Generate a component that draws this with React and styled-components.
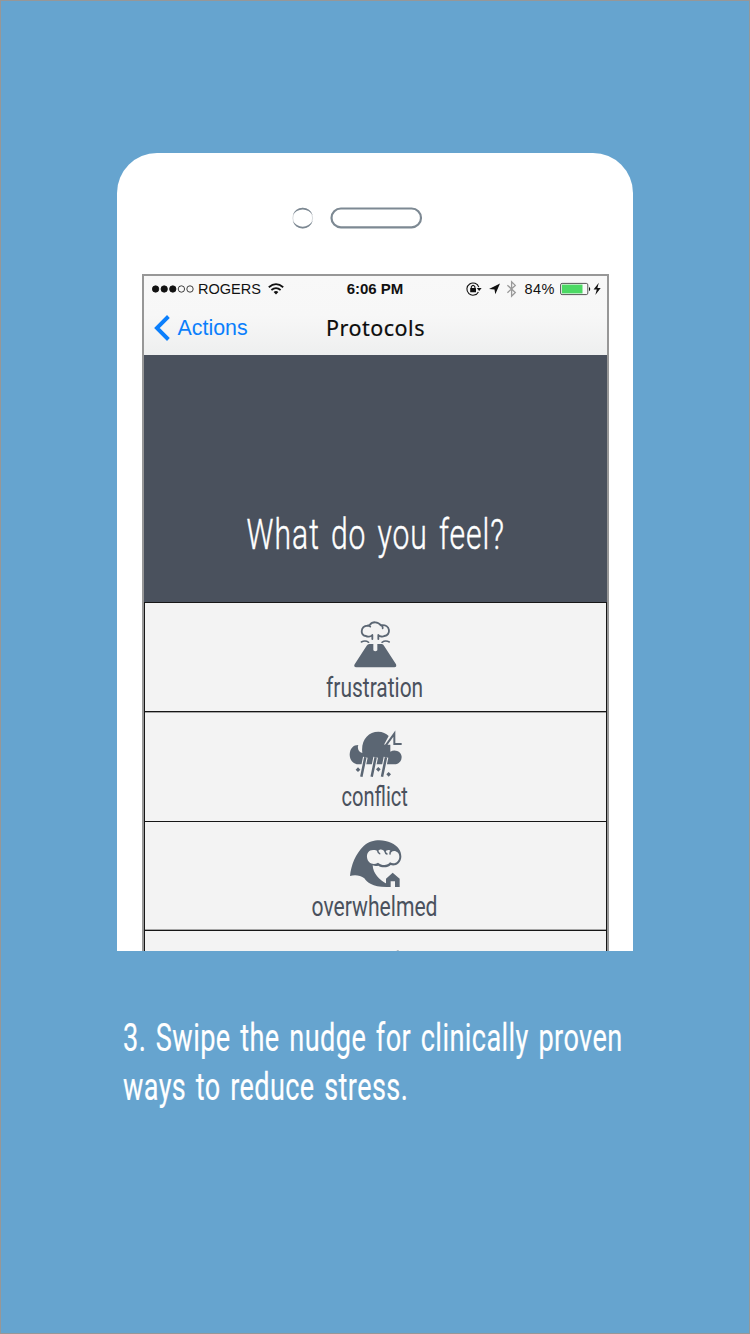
import React from "react";
import styled, { createGlobalStyle } from "styled-components";

const GlobalStyle = createGlobalStyle`
  *, *::before, *::after { box-sizing: border-box; }
  body { margin: 0; background: #66a4cf; }
`;

const Page = styled.main`
  width: 750px;
  height: 1334px;
  overflow: hidden;
  display: flex;
  flex-direction: column;
  padding: 152px 0 0 116px;
  border: 1px solid #979797;
  background: #66a4cf;
`;

const Phone = styled.section`
  width: 516px;
  height: 798px;
  flex: none;
  overflow: hidden;
  display: flex;
  flex-direction: column;
  align-items: center;
  background: #fff;
  border-radius: 40px 40px 0 0;
`;

const Earpiece = styled.div`
  height: 121px;
  width: 100%;
  flex: none;
  padding: 54px 0 0 175px;
`;

const Screen = styled.div`
  width: 467px;
  height: 700px;
  flex: none;
  display: flex;
  flex-direction: column;
  border: 2px solid #979797;
  margin-left: 1px;
`;

const Header = styled.header`
  height: 79px;
  flex: none;
  background: linear-gradient(#f8f8f8 0%, #f7f7f7 50%, #eeefef 100%);
  font-family: "Liberation Sans", Arial, sans-serif;
`;

const StatusBar = styled.div`
  height: 26px;
  display: grid;
  grid-template-columns: 1fr 60px 1fr;
  align-items: center;
  color: #111;
  font-size: 14.5px;
  line-height: 26px;
  white-space: nowrap;
`;

const StatusGroup = styled.div`
  display: flex;
  align-items: center;
  justify-content: ${(p) => (p.$end ? "flex-end" : "flex-start")};
  padding: ${(p) => (p.$end ? "0 6px 0 0" : "0 0 0 8px")};
  svg { flex: none; }
`;

const Carrier = styled.span`
  margin: 0 7px 0 4px;
`;

const Percent = styled.span`
  margin: 0 5px 0 6px;
  letter-spacing: 0.5px;
`;

const Clock = styled.strong`
  text-align: center;
  font-size: 15px;
  padding-right: 1px;
`;

const NavBar = styled.nav`
  height: 52px;
  display: grid;
  grid-template-columns: 1fr auto 1fr;
  align-items: center;
`;

const BackLink = styled.a`
  display: flex;
  align-items: center;
  gap: 7.5px;
  padding-left: 10px;
  color: #0b7ffc;
  font-size: 21.4px;
`;

const Title = styled.h1`
  margin: 0;
  color: #0c0c0c;
  font: 400 21.5px/30px "Noto Sans", sans-serif;
  letter-spacing: 0.5px;
  -webkit-text-stroke: 0.2px #0c0c0c;
`;

const Condensed = styled.span`
  display: block;
  width: max-content;
  white-space: nowrap;
  font-family: Roboto, "Liberation Sans", sans-serif;
  font-size: ${(p) => p.$size}px;
  font-weight: ${(p) => p.$weight || 400};
  line-height: ${(p) => p.$line}px;
  letter-spacing: ${(p) => p.$track || 0}px;
  word-spacing: ${(p) => p.$word || 0}px;
  -webkit-text-stroke: ${(p) => p.$stroke || 0}px currentColor;
  transform: scaleX(${(p) => p.$scale});
  transform-origin: ${(p) => p.$origin || "center"};
`;

const Prompt = styled.div`
  height: 247px;
  flex: none;
  display: flex;
  align-items: flex-end;
  justify-content: center;
  padding-bottom: 40px;
  color: #fff;
  background: #4a515d;
`;

const Feeling = styled.div`
  height: 109.4px;
  flex: none;
  display: flex;
  flex-direction: column;
  align-items: center;
  padding: ${(p) => p.$top || 7}px 2px 0 0;
  color: #4a515d;
  background: #f3f3f3;
  border: 1px solid #161616;
  border-bottom: 0;
  box-shadow: ${(p) => p.$edge || "none"};
`;

const Glyph = styled.svg`
  width: 80px;
  height: 64px;
  flex: none;
  margin-bottom: ${(p) => p.$gap || 0}px;
  fill: #5b6673;
`;

const Caption = styled.p`
  margin: 63px 0 0 5.5px;
  color: #fff;
`;

const Volcano = () => (
  <Glyph viewBox="0 0 240 192">
    <path d="M58 169 Q57 166 59 163 L95 107 Q98 102 103 102 H115 V121 Q121 127 127 121 V102 H140 Q145 102 147 107 L183 163 Q186 172 178 172 H64 Q59 172 58 169Z" />
    <g fill="none" stroke="#5b6673" strokeWidth="5.5" strokeLinecap="round" strokeLinejoin="round">
      <path d="M112 87 V75 C107 81 97 81 93 78 C75 77 75 49 98 47 L104 45 C112 34 129 34 138 46 C167 42 169 76 148 78 C143 81 134 80 130 75 V87" />
      <path d="M98 47 Q103 47 106 50 M138 46 Q144 48 143 55" strokeWidth="5" />
      <path d="M79 96 Q91 90 101 97 M141 97 Q151 90 163 96" strokeWidth="4.5" />
    </g>
  </Glyph>
);

const Storm = () => (
  <Glyph viewBox="0 0 240 192" $gap={-3}>
    <path d="M82 93 C77 55 99 29 130 29 C143 29 153 34 161 42 L147 68 H166 V89 C181 80 200 90 200 105 C200 119 190 127 178 127 H65 C50 122 44 111 44 97 C45 79 55 69 70 69 C66 78 71 91 82 93Z" />
    <path d="M145 71 H152 L178 35 V66 H200" fill="none" stroke="#5b6673" strokeWidth="6" />
    <g fill="none" stroke="#f3f3f3" strokeWidth="14">
      <path d="M91 106 L79 164 M122 106 L110 164 M153 106 L141 164" />
    </g>
    <g fill="none" stroke="#5b6673" strokeWidth="7.5">
      <path d="M91 106 L79 164 M122 106 L110 164 M153 106 L141 164" />
    </g>
    <path d="M69 136 l7 7 -7 7 -7 -7z M130 135 l7 7 -7 7 -7 -7z M161 150 l7 7 -7 7 -7 -7z" />
  </Glyph>
);

const Wave = () => (
  <Glyph viewBox="0 0 240 192" $gap={-3}>
    <path d="M45 132 C48 100 62 65 86 42 C110 20 145 22 168 32 C189 41 199 57 199 74 C198 94 181 104 167 99 C159 108 139 108 130 101 Q121 104 113 100 C114 125 134 145 155 155 V165 C111 165 96 151 88 139 C76 129 58 128 45 132Z" />
    <path d="M118 54 C102 52 95 63 96 76 C98 95 116 100 129 92 C141 102 158 101 165 91 C180 100 193 87 193 74 C193 60 180 53 169 59 C164 52 155 53 150 60 C144 51 134 50 128 58 Q123 54 118 54Z" fill="#f3f3f3" />
    <path d="M128 56 Q129 63 134 65 M150 58 Q151 64 156 66 M169 57 Q164 60 165 66" fill="none" stroke="#5b6673" strokeWidth="4.5" strokeLinecap="round" />
    <path d="M153 140 L173 122 L194 140 V165 H180 V148 H167 V165 H153Z" />
  </Glyph>
);

const SignalDots = () => (
  <svg width="42" height="10" viewBox="0 0 42 10" stroke="#111" strokeWidth=".8">
    <circle cx="3.6" cy="5" r="3.2" fill="#111" />
    <circle cx="12.2" cy="5" r="3.2" fill="#111" />
    <circle cx="20.8" cy="5" r="3.2" fill="#111" />
    <circle cx="29.4" cy="5" r="3.2" fill="none" />
    <circle cx="38" cy="5" r="3.2" fill="none" />
  </svg>
);

const Wifi = () => (
  <svg width="16" height="12" viewBox="0 0 16 12" fill="none" stroke="#111" strokeWidth="1.8">
    <path d="M.8 4.2 Q8 -1.9 15.2 4.2 M3.4 7 Q8 3.2 12.6 7" />
    <path d="M5.6 9 Q8 7 10.4 9 L8 11.6Z" fill="#111" stroke="none" />
  </svg>
);

const StatusIcons = () => (
  <svg width="52" height="18" viewBox="0 0 52 18">
    <path d="M12.4 11.9 A6.1 6.1 0 1 1 12.8 7.2" fill="none" stroke="#111" strokeWidth="1.1" />
    <path d="M10.8 8 H15.6 L13.2 11Z" fill="#111" />
    <rect x="4.2" y="8.1" width="5.8" height="4.2" rx=".5" fill="#111" />
    <path d="M5.3 8.2 V6.8 Q7.1 4 8.9 6.8 V8.2" fill="none" stroke="#111" strokeWidth="1.1" />
    <path d="M34 3.5 L29.3 14.3 L28.5 9.5 L23 8.9Z" fill="#111" />
    <path d="M41.4 5.2 L49.3 12.5 L45.6 16.1 V1.8 L49.3 5.4 L41.4 12.7" fill="none" stroke="#999" strokeWidth="1.3" />
  </svg>
);

const Battery = () => (
  <svg width="41" height="14" viewBox="0 0 41 14">
    <rect x=".6" y="1.4" width="27.2" height="11.2" rx="1.5" fill="none" stroke="#555" />
    <rect x="1.9" y="2.6" width="20.6" height="8.8" fill="#4cd964" />
    <path d="M29 4.7 Q31.5 7 29 9.3Z" fill="#111" />
    <path d="M38.8 .8 L33.6 7.6 H36.8 L35.3 13 L40.7 6 H37.4Z" fill="#111" />
  </svg>
);

const HAIRLINE_TOP = "inset 0 1px 0 #a5a5a5";
const HAIRLINE_BOTTOM = "inset 0 -1px 0 #a5a5a5";

const FEELINGS = [
  { name: "frustration", Icon: Volcano, scale: 0.775 },
  { name: "conflict", Icon: Storm, scale: 0.745, top: 10, edge: HAIRLINE_TOP },
  { name: "overwhelmed", Icon: Wave, scale: 0.782, top: 10, edge: HAIRLINE_BOTTOM },
];

export default function App() {
  return (
    <>
      <GlobalStyle />
      <Page>
        <Phone>
          <Earpiece>
            <svg width="132" height="22" viewBox="0 0 132 22">
              <g fill="#7d8993">
                <path d="M.7 8.2 A10.4 10.4 0 0 1 20.7 8.2 A11.7 11.7 0 0 0 .7 8.2Z" />
                <path d="M.7 14 A10.4 10.4 0 0 0 20.7 14 A11.7 11.7 0 0 1 .7 14Z" />
              </g>
              <circle cx="10.7" cy="11.1" r="9.9" fill="none" stroke="#7d8993" strokeWidth=".3" />
              <rect x="39.5" y="1.5" width="89.5" height="18.8" rx="9.4" fill="none" stroke="#7d8993" strokeWidth="2.2" />
            </svg>
          </Earpiece>
          <Screen>
            <Header>
              <StatusBar>
                <StatusGroup>
                  <SignalDots />
                  <Carrier>ROGERS</Carrier>
                  <Wifi />
                </StatusGroup>
                <Clock>6:06 PM</Clock>
                <StatusGroup $end>
                  <StatusIcons />
                  <Percent>84%</Percent>
                  <Battery />
                </StatusGroup>
              </StatusBar>
              <NavBar>
                <BackLink>
                  <svg width="16" height="26" viewBox="0 0 16 26" fill="none" stroke="#0b7ffc" strokeWidth="3.9">
                    <path d="M14.4 1.5 L2.9 13 L14.4 24.5" />
                  </svg>
                  Actions
                </BackLink>
                <Title>Protocols</Title>
              </NavBar>
            </Header>
            <Prompt>
              <Condensed $size={43} $weight={300} $line={56} $scale={0.699} $track={1.4} $word={4} $stroke={0.45}>
                What do you feel?
              </Condensed>
            </Prompt>
            {FEELINGS.map(({ name, Icon, scale, top, edge }) => (
              <Feeling key={name} $top={top} $edge={edge}>
                <Icon />
                <Condensed $size={27} $line={28} $scale={scale}>
                  {name}
                </Condensed>
              </Feeling>
            ))}
            <Feeling>
              <svg width="80" height="22" viewBox="0 0 80 22">
                <path d="M60 13.5 L63.5 12 V16 H60Z" fill="#8c949c" />
              </svg>
            </Feeling>
          </Screen>
        </Phone>
        <Caption>
          <Condensed $size={39} $line={49} $scale={0.695} $track={0.6} $word={3.6} $stroke={0.2} $origin="left center">
            3. Swipe the nudge for clinically proven
          </Condensed>
          <Condensed $size={39} $line={49} $scale={0.693} $track={0.6} $word={3.6} $stroke={0.2} $origin="left center">
            ways to reduce stress.
          </Condensed>
        </Caption>
      </Page>
    </>
  );
}
